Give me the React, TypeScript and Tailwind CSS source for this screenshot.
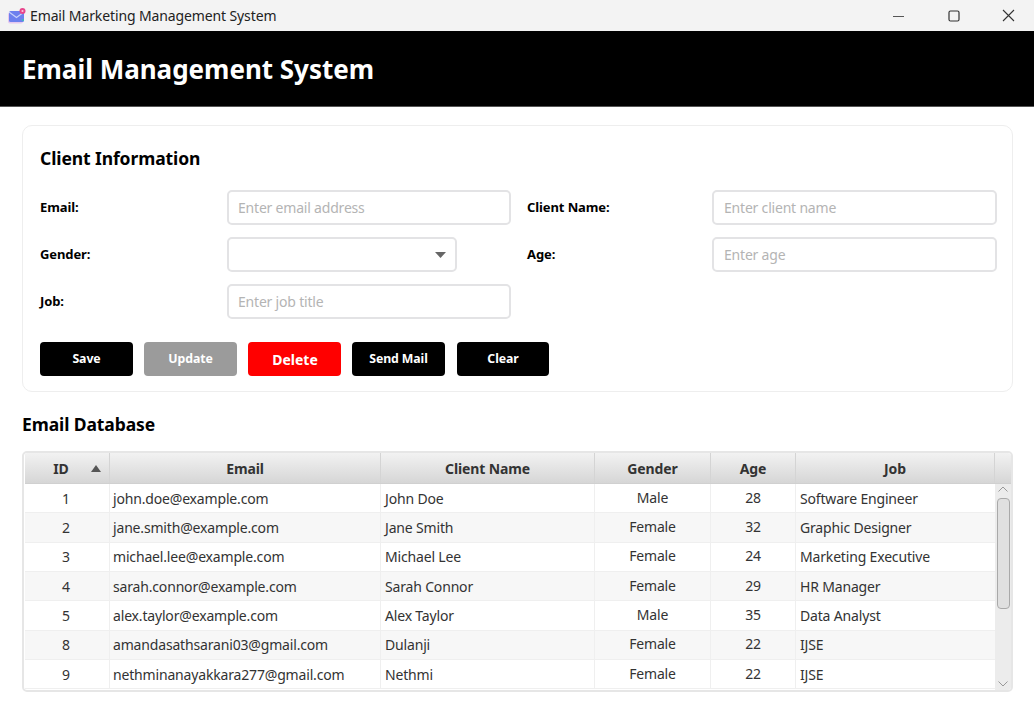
import React from "react";

const rows = [
  ["1", "john.doe@example.com", "John Doe", "Male", "28", "Software Engineer"],
  ["2", "jane.smith@example.com", "Jane Smith", "Female", "32", "Graphic Designer"],
  ["3", "michael.lee@example.com", "Michael Lee", "Female", "24", "Marketing Executive"],
  ["4", "sarah.connor@example.com", "Sarah Connor", "Female", "29", "HR Manager"],
  ["5", "alex.taylor@example.com", "Alex Taylor", "Male", "35", "Data Analyst"],
  ["8", "amandasathsarani03@gmail.com", "Dulanji", "Female", "22", "IJSE"],
  ["9", "nethminanayakkara277@gmail.com", "Nethmi", "Female", "22", "IJSE"],
];

function Label({ children }: { children: React.ReactNode }) {
  return <div className="w-[187px] shrink-0 text-[13px] font-bold text-black tracking-[-0.1px]">{children}</div>;
}

function Input({ placeholder, right }: { placeholder: string; right?: boolean }) {
  return (
    <div
      className={
        "h-[35px] shrink-0 border-2 border-[#e3e3e5] rounded-[5px] bg-white flex items-center text-[14px] text-[#b4b4b4] tracking-[-0.2px] " +
        (right ? "w-[285px] pl-[10px]" : "w-[284px] pl-[9px]")
      }
    >
      {placeholder}
    </div>
  );
}

function Btn({ children, cls }: { children: React.ReactNode; cls: string }) {
  return (
    <div className={"h-[34px] rounded-[4px] flex items-center justify-center font-bold text-white " + cls}>
      {children}
    </div>
  );
}

function Head({ w, children, extra }: { w: string; children: React.ReactNode; extra?: React.ReactNode }) {
  return (
    <div className={"h-full shrink-0 border-r border-[#d4d4d4] flex items-center justify-center relative text-[14px] font-bold text-[#333333] tracking-[-0.13px] " + w}>
      {children}
      {extra}
    </div>
  );
}

export default function App() {
  return (
    <div className="w-[1034px] h-[721px] overflow-hidden bg-white flex flex-col font-['Noto_Sans','Open_Sans',sans-serif]">
      <div className="h-[31px] shrink-0 bg-[#f3f3f3] flex items-center pl-[8px]">
        <svg width="18" height="16" viewBox="0 0 18 16" className="shrink-0">
          <rect x="0" y="4.5" width="15" height="11" rx="2" fill="#e6c8ef" />
          <rect x="1" y="3" width="15" height="11" rx="1.5" fill="#6d80ee" />
          <path d="M1 4 L8.5 9.5 L16 4" fill="none" stroke="#c9d2fb" strokeWidth="1.2" />
          <circle cx="14.5" cy="3" r="3" fill="#e8468c" />
          <circle cx="14.5" cy="3" r="1.1" fill="#f9c5dc" />
          <circle cx="15" cy="12" r="1" fill="#35c4b5" />
        </svg>
        <div className="ml-[4px] text-[14px] text-[#222222] tracking-[-0.12px] whitespace-nowrap">Email Marketing Management System</div>
        <div className="ml-auto flex items-center">
          <svg width="12" height="12" viewBox="0 0 12 12" className="mr-[43px]">
            <path d="M0 6.5 H11" stroke="#555" strokeWidth="1" />
          </svg>
          <svg width="12" height="12" viewBox="0 0 12 12" className="mr-[42px]">
            <rect x="1" y="1" width="10" height="10" rx="1.5" fill="none" stroke="#333" strokeWidth="1.2" />
          </svg>
          <svg width="13" height="13" viewBox="0 0 13 13" className="mr-[19px]">
            <path d="M1 1 L12 12 M12 1 L1 12" stroke="#333" strokeWidth="1.1" />
          </svg>
        </div>
      </div>

      <div className="h-[76px] shrink-0 bg-black border-b border-[#555555] flex items-center pl-[22px] pt-[2px] text-[26px] font-bold text-white tracking-[-0.02px]">
        Email Management System
      </div>

      <div className="flex-1 px-[22px] pt-[18px] flex flex-col">
        <div className="w-[991px] h-[267px] border border-[#eeeeee] rounded-[10px] pl-[17px] pt-[19px] flex flex-col">
          <div className="text-[17.5px] leading-[26px] font-bold text-black tracking-[-0.1px]">Client Information</div>
          <div className="mt-[19px] flex flex-col gap-[12px]">
            <div className="flex items-center">
              <Label>Email:</Label>
              <Input placeholder="Enter email address" />
              <div className="w-[16px] shrink-0" />
              <div className="w-[185px] shrink-0 text-[13px] font-bold text-black tracking-[-0.1px]">Client Name:</div>
              <Input right placeholder="Enter client name" />
            </div>
            <div className="flex items-center">
              <Label>Gender:</Label>
              <div className="w-[230px] h-[35px] shrink-0 border-2 border-[#e3e3e5] rounded-[5px] bg-white flex items-center justify-end pr-[9px]">
                <svg width="11" height="6" viewBox="0 0 11 6"><path d="M0 0 H11 L5.5 6 Z" fill="#666666" /></svg>
              </div>
              <div className="w-[70px] shrink-0" />
              <div className="w-[185px] shrink-0 text-[13px] font-bold text-black tracking-[-0.1px]">Age:</div>
              <Input right placeholder="Enter age" />
            </div>
            <div className="flex items-center">
              <Label>Job:</Label>
              <Input placeholder="Enter job title" />
            </div>
          </div>
          <div className="mt-[23px] flex gap-[11px] text-[12.3px] tracking-[-0.1px]">
            <Btn cls="w-[93px] bg-black">Save</Btn>
            <Btn cls="w-[93px] bg-[#9b9b9b]">Update</Btn>
            <Btn cls="w-[93px] pl-[1px] bg-[#ff0000] text-[14px] tracking-[0px]">Delete</Btn>
            <Btn cls="w-[93px] bg-black">Send Mail</Btn>
            <Btn cls="w-[92px] bg-black ml-[1px]">Clear</Btn>
          </div>
        </div>

        <div className="mt-[19px] text-[17.5px] leading-[26px] font-bold text-black tracking-[-0.1px]">Email Database</div>

        <div className="mt-[14px] w-[991px] h-[241px] border-2 border-[#e6e6e6] rounded-[5px] pl-[1px] flex flex-col overflow-hidden">
          <div className="h-[31px] shrink-0 flex bg-gradient-to-b from-[#f2f2f2] to-[#d6d6d6] border-b border-[#d0d0d0]">
            <Head
              w="w-[85px]"
              extra={
                <svg width="10" height="7" viewBox="0 0 10 7" className="absolute left-[66px] top-[12px]">
                  <path d="M5 0 L10 7 H0 Z" fill="#555555" />
                </svg>
              }
            >
              <span className="mr-[12px]">ID</span>
            </Head>
            <Head w="w-[271px]">Email</Head>
            <Head w="w-[214px]">Client Name</Head>
            <Head w="w-[116px]">Gender</Head>
            <Head w="w-[85px]">Age</Head>
            <Head w="w-[199px]">Job</Head>
            <div className="flex-1" />
          </div>
          <div className="flex-1 flex min-h-0">
            <div className="w-[970px] shrink-0 overflow-hidden">
              {rows.map((r, i) => (
                <div
                  key={r[0]}
                  className={
                    "h-[29.33px] flex items-center text-[14px] text-[#333333] tracking-[-0.17px] border-b border-[#efefef] " +
                    (i % 2 === 1 ? "bg-[#f7f7f7]" : "bg-white")
                  }
                >
                  <div className="w-[85px] h-full shrink-0 border-r border-[#efefef] flex items-center justify-center pr-[2px]">
                    {r[0]}
                  </div>
                  <div className="w-[271px] h-full shrink-0 border-r border-[#efefef] flex items-center pl-[3px] whitespace-nowrap">
                    {r[1]}
                  </div>
                  <div className="w-[214px] h-full shrink-0 border-r border-[#efefef] flex items-center pl-[4px]">
                    {r[2]}
                  </div>
                  <div className="w-[116px] h-full shrink-0 border-r border-[#efefef] flex items-center justify-center pb-[2px]">
                    {r[3]}
                  </div>
                  <div className="w-[85px] h-full shrink-0 border-r border-[#efefef] flex items-center justify-center pb-[2px]">
                    {r[4]}
                  </div>
                  <div className="w-[199px] h-full shrink-0 flex items-center pl-[4px] whitespace-nowrap">{r[5]}</div>
                </div>
              ))}
            </div>
            <div className="flex-1 bg-[#ececec] flex flex-col items-center">
              <svg width="10" height="6" viewBox="0 0 10 6" className="mt-[2px] shrink-0">
                <path d="M0.5 5.5 L5 1 L9.5 5.5" fill="none" stroke="#999999" strokeWidth="1" />
              </svg>
              <div className="mt-[6px] w-[13px] h-[111px] shrink-0 bg-[#e0e0e0] border border-[#a9a9a9] rounded-[4px]" />
              <svg width="10" height="6" viewBox="0 0 10 6" className="mt-auto mb-[3px] shrink-0">
                <path d="M0.5 0.5 L5 5 L9.5 0.5" fill="none" stroke="#999999" strokeWidth="1" />
              </svg>
            </div>
          </div>
        </div>
      </div>
    </div>
  );
}
